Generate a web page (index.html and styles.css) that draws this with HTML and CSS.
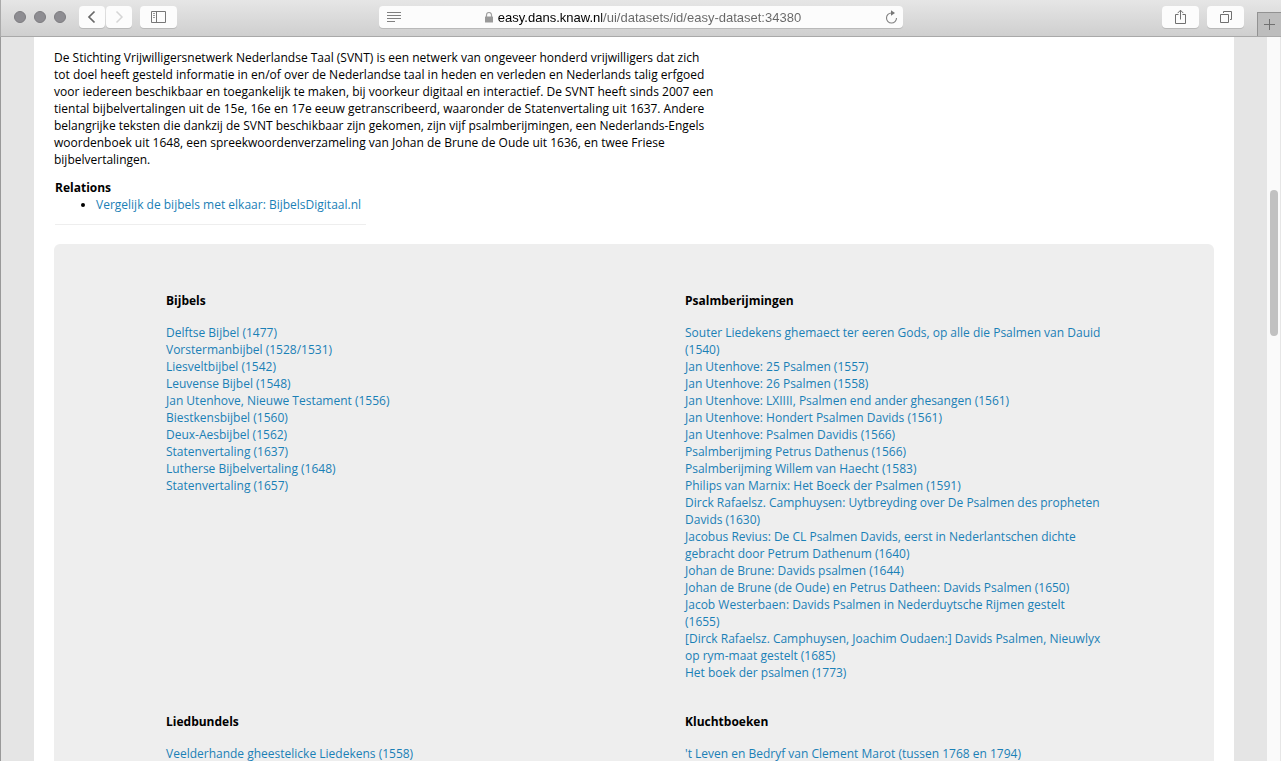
FILE: index.html
```html
<!DOCTYPE html>
<html lang="nl">
<head>
<meta charset="utf-8">
<title>EASY dataset 34380</title>
<link rel="stylesheet" href="styles.css">
</head>
<body>
<header class="toolbar">
  <div class="tools tools-left">
    <div class="lights"><span class="light"></span><span class="light"></span><span class="light"></span></div>
    <div class="nav">
      <button class="btn nav-btn" aria-label="Back"><svg width="26" height="22" viewBox="0 0 26 22"><path d="M15.500 5.500 10 11l5.500 5.500" fill="none" stroke="#686868" stroke-width="1.700"/></svg></button>
      <button class="btn nav-btn" aria-label="Forward"><svg width="26" height="22" viewBox="0 0 26 22"><path d="M10.500 5.500 16 11l-5.500 5.500" fill="none" stroke="#d5d5d5" stroke-width="1.500"/></svg></button>
    </div>
    <button class="btn wide-btn" aria-label="Sidebar"><svg width="15" height="12" viewBox="0 0 15 12" fill="none" stroke="#777"><path d="M.5.5h14v11H.5zM5.500.5v11"/><path d="M2 2.500H4M2 4.500H4M2 6.500H4" stroke="#999"/></svg></button>
  </div>
  <div class="address">
    <button class="icon-btn" aria-label="Reader"><svg width="14" height="10" viewBox="0 0 14 10"><path d="M0 .5h14M0 3.500h14M0 6.500h14M0 9.500h8" stroke="#808080"/></svg></button>
    <div class="location">
      <svg width="8" height="11" viewBox="0 0 8 11"><path d="M1.500 5V3a2.500 2.500 0 0 1 5 0v2" fill="none" stroke="#a0a0a0" stroke-width="1.200"/><rect y="4.500" width="8" height="6" rx=".5" fill="#999"/></svg>
      <input class="url" type="text" aria-label="Address" value="easy.dans.knaw.nl/ui/datasets/id/easy-dataset:34380">
    </div>
    <button class="icon-btn" aria-label="Reload"><svg width="13" height="14" viewBox="0 0 13 14"><path d="M7 3H6.500A5 5 0 1 0 11.500 8" fill="none" stroke="#808080" stroke-width="1.100"/><path d="M6 .2 10 3 6 5.800z" fill="#777"/></svg></button>
  </div>
  <div class="tools tools-right">
    <button class="btn wide-btn" aria-label="Share"><svg width="11" height="16" viewBox="0 0 11 16" fill="none" stroke="#707070"><path d="M3.500 5.500H.5v9h10v-9h-3M5.500 10.500V1.500M2.700 4.100 5.500 1.200l2.800 2.900"/></svg></button>
    <button class="btn wide-btn" aria-label="Tabs"><svg width="12" height="12" viewBox="0 0 12 12" fill="none" stroke="#707070"><path d="M.5 3.500h8v8h-8zM3.500 2V.5h8v8H10"/></svg></button>
    <button class="new-tab" aria-label="New tab"><svg width="11" height="11" viewBox="0 0 11 11"><path d="M0 5.500h11M5.500 0v11" stroke="#707070"/></svg></button>
  </div>
</header>
<div class="viewport">
  <main class="page">
    <p class="intro">De Stichting Vrijwilligersnetwerk Nederlandse Taal (SVNT) is een netwerk van ongeveer honderd vrijwilligers dat zich tot doel heeft gesteld informatie in en/of over de Nederlandse taal in heden en verleden en Nederlands talig erfgoed voor iedereen beschikbaar en toegankelijk te maken, bij voorkeur digitaal en interactief. De SVNT heeft sinds 2007 een tiental bijbelvertalingen uit de 15e, 16e en 17e eeuw getranscribeerd, waaronder de Statenvertaling uit 1637. Andere belangrijke teksten die dankzij de SVNT beschikbaar zijn gekomen, zijn vijf psalmberijmingen, een Nederlands-Engels woordenboek uit 1648, een spreekwoordenverzameling van Johan de Brune de Oude uit 1636, en twee Friese bijbelvertalingen.</p>
    <section class="relations">
      <h2>Relations</h2>
      <ul><li><a href="#">Vergelijk de bijbels met elkaar: BijbelsDigitaal.nl</a></li></ul>
    </section>
    <div class="panel">
      <section>
        <h2>Bijbels</h2>
        <ul class="links">
          <li><a href="#">Delftse Bijbel (1477)</a></li>
          <li><a href="#">Vorstermanbijbel (1528/1531)</a></li>
          <li><a href="#">Liesveltbijbel (1542)</a></li>
          <li><a href="#">Leuvense Bijbel (1548)</a></li>
          <li><a href="#">Jan Utenhove, Nieuwe Testament (1556)</a></li>
          <li><a href="#">Biestkensbijbel (1560)</a></li>
          <li><a href="#">Deux-Aesbijbel (1562)</a></li>
          <li><a href="#">Statenvertaling (1637)</a></li>
          <li><a href="#">Lutherse Bijbelvertaling (1648)</a></li>
          <li><a href="#">Statenvertaling (1657)</a></li>
        </ul>
      </section>
      <section>
        <h2>Psalmberijmingen</h2>
        <ul class="links">
          <li><a href="#">Souter Liedekens ghemaect ter eeren Gods, op alle die Psalmen van Dauid (1540)</a></li>
          <li><a href="#">Jan Utenhove: 25 Psalmen (1557)</a></li>
          <li><a href="#">Jan Utenhove: 26 Psalmen (1558)</a></li>
          <li><a href="#">Jan Utenhove: LXIIII, Psalmen end ander ghesangen (1561)</a></li>
          <li><a href="#">Jan Utenhove: Hondert Psalmen Davids (1561)</a></li>
          <li><a href="#">Jan Utenhove: Psalmen Davidis (1566)</a></li>
          <li><a href="#">Psalmberijming Petrus Dathenus (1566)</a></li>
          <li><a href="#">Psalmberijming Willem van Haecht (1583)</a></li>
          <li><a href="#">Philips van Marnix: Het Boeck der Psalmen (1591)</a></li>
          <li><a href="#">Dirck Rafaelsz. Camphuysen: Uytbreyding over De Psalmen des propheten Davids (1630)</a></li>
          <li><a href="#">Jacobus Revius: De CL Psalmen Davids, eerst in Nederlantschen dichte gebracht door Petrum Dathenum (1640)</a></li>
          <li><a href="#">Johan de Brune: Davids psalmen (1644)</a></li>
          <li><a href="#">Johan de Brune (de Oude) en Petrus Datheen: Davids Psalmen (1650)</a></li>
          <li><a href="#">Jacob Westerbaen: Davids Psalmen in Nederduytsche Rijmen gestelt (1655)</a></li>
          <li><a href="#">[Dirck Rafaelsz. Camphuysen, Joachim Oudaen:] Davids Psalmen, Nieuwlyx op rym-maat gestelt (1685)</a></li>
          <li><a href="#">Het boek der psalmen (1773)</a></li>
        </ul>
      </section>
      <section>
        <h2>Liedbundels</h2>
        <ul class="links"><li><a href="#">Veelderhande gheestelicke Liedekens (1558)</a></li></ul>
      </section>
      <section>
        <h2>Kluchtboeken</h2>
        <ul class="links"><li><a href="#">'t Leven en Bedryf van Clement Marot (tussen 1768 en 1794)</a></li></ul>
      </section>
    </div>
  </main>
  <div class="scroll-track"><div class="scroll-thumb"></div></div>
</div>
</body>
</html>
```
FILE: styles.css
```css
* { box-sizing: border-box; }
body {
  margin: 0;
  height: 100vh;
  display: flex;
  flex-direction: column;
  overflow: hidden;
  font: 12px/17px "Open Sans", sans-serif;
  color: #000;
}
button { border: 0; padding: 0; background: none; display: flex; align-items: center; justify-content: center; }
svg { display: block; flex: none; }
h2, p, ul { margin: 0; padding: 0; }
h2 { font-size: 12px; line-height: 17px; font-weight: 700; }
a { color: #1a80b6; text-decoration: none; }

.toolbar {
  flex: none;
  display: grid;
  grid-template-columns: 1fr 41% 1fr;
  height: 37px;
  border-bottom: 1px solid #a9a9a9;
  border-left: 1px solid #aaa;
  background: linear-gradient(#e6e6e6, #cfcfcf);
}
.tools { display: flex; align-items: flex-start; padding-top: 6px; }
.tools-left { padding-left: 13px; }
.tools-right { justify-content: flex-end; gap: 8px; }
.lights { display: flex; gap: 8px; padding-top: 5px; margin-right: 13px; }
.light { width: 12px; height: 12px; border-radius: 50%; background: #8e8d92; border: 1px solid #7d7c80; }
.nav { display: flex; gap: 1px; margin-right: 8px; }
.btn { height: 22px; background: #fcfcfc; border-radius: 4px; box-shadow: 0 1px 0 #b9b9b9; }
.nav-btn { width: 26px; }
.wide-btn { width: 37px; }
.address {
  display: flex;
  align-items: center;
  height: 22px;
  margin-top: 6px;
  padding: 0 5px 0 8px;
  background: #fcfcfc;
  border-radius: 4px;
  box-shadow: 0 1px 0 #b9b9b9;
}
.location { flex: 1; display: flex; align-items: center; justify-content: center; gap: 5px; }
.url {
  field-sizing: content;
  border: 0;
  padding: 1px 0 0;
  font: 13px/20px "Liberation Sans", Arial, sans-serif;
  color: transparent;
  background: linear-gradient(90deg, #000 104px, #666 104px);
  background-clip: text;
}
.new-tab { width: 24px; height: 24px; margin: 6px 0 0 5px; background: #bdbdbd; border: 1px solid #929292; border-width: 1px 0 0 1px; }

.viewport { flex: 1; min-height: 0; display: flex; overflow: hidden; background: #e5e5e5; border-left: 1px solid #999; }
.page { flex: 1; min-width: 0; margin: 0 33px; padding: 12px 20px; background: #fff; }
.intro { max-width: 660px; margin-bottom: 11px; }
.relations { width: 311px; margin-left: 1px; padding-bottom: 11px; border-bottom: 1px solid #eee; }
.relations ul { padding-left: 41px; }
.panel {
  display: grid;
  grid-template-columns: 1fr 1fr;
  gap: 32px 103px;
  margin-top: 19px;
  padding: 48px 113px 32px 112px;
  background: #eee;
  border-radius: 6px;
}
.links { list-style: none; margin-top: 15px; }
.scroll-track { flex: none; width: 14px; padding: 153px 3px 0; background: #fafafa; border-right: 1px solid #e6e6e6; }
.scroll-thumb { width: 8px; height: 146px; border-radius: 4px; background: #c1c1c1; }
```
